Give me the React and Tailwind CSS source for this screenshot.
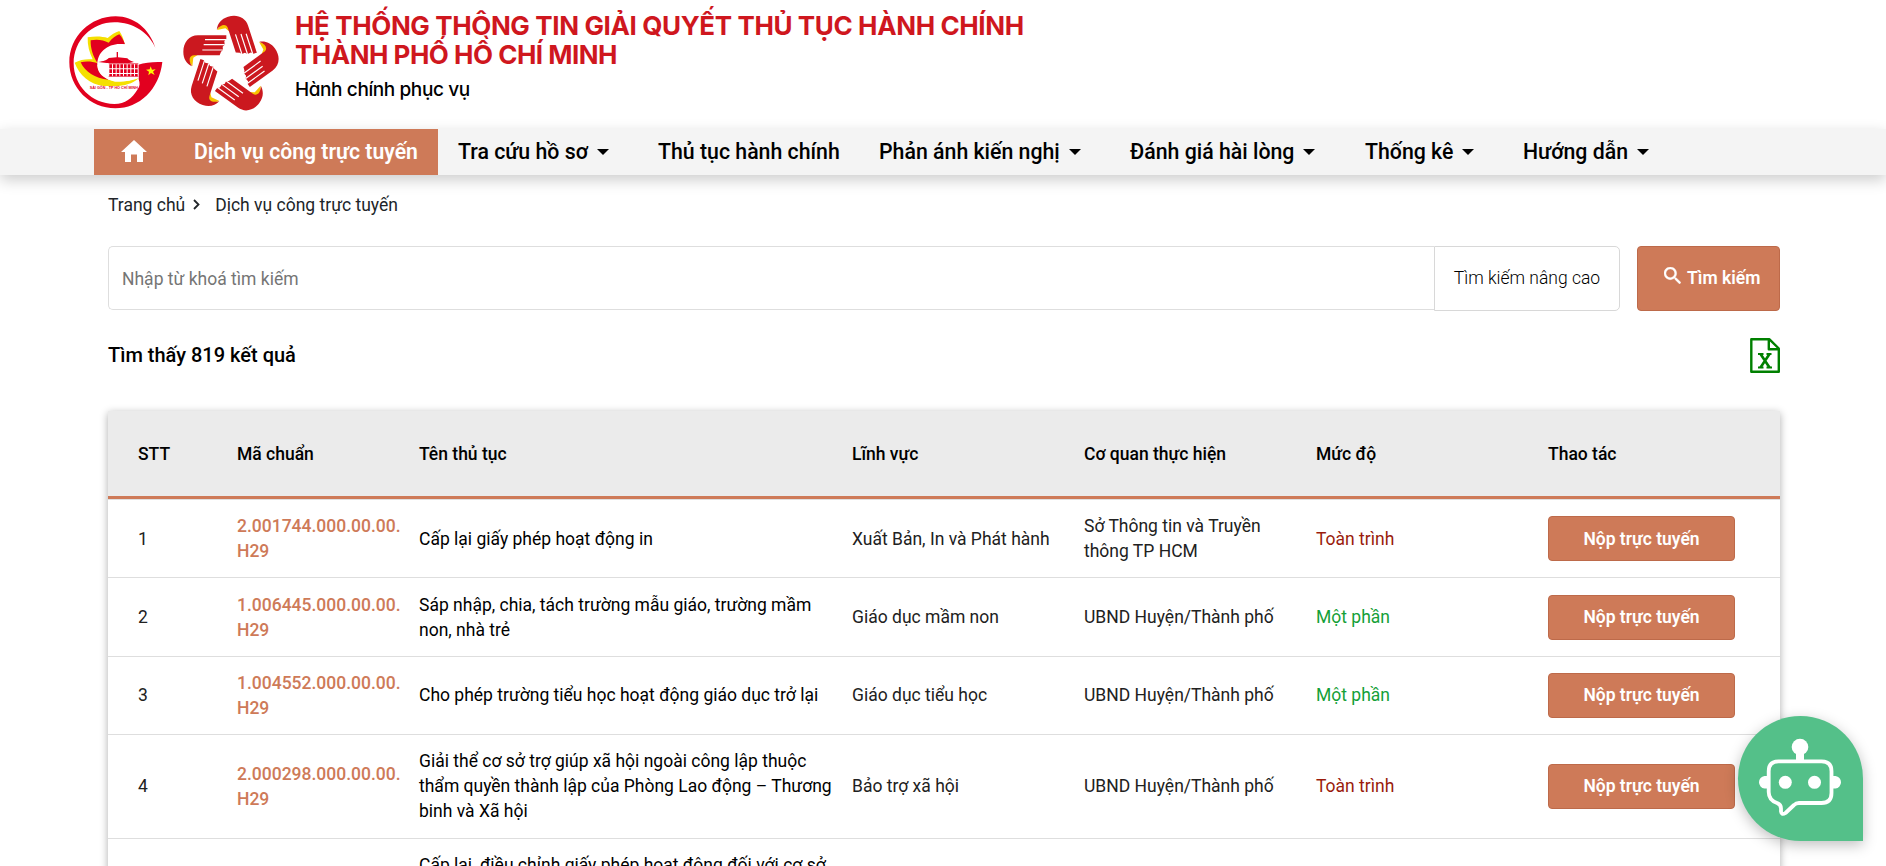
import React from "react";

const navItems = [
  { label: "Tra cứu hồ sơ", caret: true, width: "w-[200px]" },
  { label: "Thủ tục hành chính", caret: false, width: "w-[221px]" },
  { label: "Phản ánh kiến nghị", caret: true, width: "w-[251px]" },
  { label: "Đánh giá hài lòng", caret: true, width: "w-[235px]" },
  { label: "Thống kê", caret: true, width: "w-[158px]" },
  { label: "Hướng dẫn", caret: true, width: "w-[170px]" },
];

const rows = [
  {
    id: 1,
    code: ["2.001744.000.00.00.", "H29"],
    name: ["Cấp lại giấy phép hoạt động in"],
    field: "Xuất Bản, In và Phát hành",
    agency: ["Sở Thông tin và Truyền", "thông TP HCM"],
    level: "Toàn trình",
  },
  {
    id: 2,
    code: ["1.006445.000.00.00.", "H29"],
    name: ["Sáp nhập, chia, tách trường mẫu giáo, trường mầm", "non, nhà trẻ"],
    field: "Giáo dục mầm non",
    agency: ["UBND Huyện/Thành phố"],
    level: "Một phần",
  },
  {
    id: 3,
    code: ["1.004552.000.00.00.", "H29"],
    name: ["Cho phép trường tiểu học hoạt động giáo dục trở lại"],
    field: "Giáo dục tiểu học",
    agency: ["UBND Huyện/Thành phố"],
    level: "Một phần",
  },
  {
    id: 4,
    code: ["2.000298.000.00.00.", "H29"],
    name: [
      "Giải thể cơ sở trợ giúp xã hội ngoài công lập thuộc",
      "thẩm quyền thành lập của Phòng Lao động – Thương",
      "binh và Xã hội",
    ],
    field: "Bảo trợ xã hội",
    agency: ["UBND Huyện/Thành phố"],
    level: "Toàn trình",
  },
];

function Lines({ items }) {
  return items.map((line) => (
    <span key={line} className="block whitespace-nowrap">
      {line}
    </span>
  ));
}

function CityLogo() {
  return (
    <svg className="h-[93px] w-[94px]" viewBox="27 50 282 279">
      <path
        fill="#e2001f"
        d="M286 145C268 88 222 51 167 51C90 51 28 113 28 189C28 266 90 327 166 327C238 327 298 270 307 188C280 187 255 189 235 196L236 240C240 252 240 262 233 270C216 298 196 314 163 314C95 314 41 259 41 192C41 123 95 69 163 69C220 69 266 100 286 145Z"
      />
      <path fill="#f5df00" d="M44 190C60 181 80 178 98 180C88 160 82 138 83 114C106 110 127 111 143 116C154 106 165 100 178 95C185 105 191 118 194 135L160 140L112 198C118 225 140 243 165 247C195 248 220 243 236 236C225 248 205 257 175 260H130C90 254 58 228 44 190Z" />
      <path fill="#e2001f" d="M62 189C80 185 98 187 113 192C98 170 91 145 92 123C112 119 130 122 146 130C157 116 167 109 178 105C186 114 192 125 195 135L160 140L112 198C113 215 125 232 146 241C104 238 75 217 62 189Z" />
      <path fill="#fff" d="M195 135C150 127 110 155 112 198C112 215 123 232 146 241C176 248 206 245 235 236V197L250 160Z" />
      <path fill="#e2001f" d="M114 188C130 186 142 182 146 176L170 174V158H174V174L202 177C206 183 214 186 222 188L208 191H140Z" />
      <g fill="#e2001f">
        {[148, 159, 170, 181, 192, 203, 214, 225].map((x) => (
          <path key={x} d={`M${x} 195h8v12h-8zM${x} 210h8v11h-8zM${x} 224h8v7h-8z`} />
        ))}
      </g>
      <path stroke="#e2001f" strokeWidth="2" d="M146 193H235M146 231H235" />
      <path fill="#fff600" d="M272 201L276 211L287 210L279 217L284 227L273 221L265 228L267 217L258 211L269 210Z" />
      <text
        x="89"
        y="270"
        textLength="145"
        lengthAdjust="spacingAndGlyphs"
        className="fill-[#e2001f] font-['Liberation_Sans'] text-[11px] font-bold"
      >
        SÀI GÒN - TP HỒ CHÍ MINH
      </text>
    </svg>
  );
}

function HandsLogo() {
  return (
    <svg className="h-[94px] w-[96px] overflow-visible" viewBox="366 47 288 282">
      {[0, 72, 144, 216, 288].map((angle) => (
        <g key={angle} transform={`rotate(${angle} 509 194)`}>
          <path fill="#f8c300" d="M388 185L397 198L400 172L414 163L380 160Z" />
          <path
            fill="#cb181f"
            d="M499 105L414 105C387 105 370 127 370 154C370 176 380 190 396 198C384 180 388 165 402 165L479 165L483 154L489 149L488 139L494 133L493 122L499 116Z"
          />
          <path fill="none" stroke="#fff" strokeWidth="3.5" d="M435 118H499M431 133H494M427 149H489" />
        </g>
      ))}
    </svg>
  );
}

function Header() {
  return (
    <header className="flex h-[129px] shrink-0 pl-[69px]">
      <div className="flex gap-[19px] pt-4">
        <CityLogo />
        <HandsLogo />
      </div>
      <div className="ml-[17px] pt-[11px] font-[Inter,sans-serif] [font-feature-settings:'cv11']">
        <h1 className="text-[26px] leading-[29px] font-[650] tracking-[-0.38px] whitespace-nowrap text-[#cf171e]">
          <span className="block">HỆ THỐNG THÔNG TIN GIẢI QUYẾT THỦ TỤC HÀNH CHÍNH</span>
          <span className="block tracking-[-0.5px]">THÀNH PHỐ HỒ CHÍ MINH</span>
        </h1>
        <p className="mt-[9px] text-[19px] leading-6 font-medium tracking-[-0.4px] text-black">Hành chính phục vụ</p>
      </div>
    </header>
  );
}

function NavBar() {
  return (
    <nav className="flex h-[46px] shrink-0 bg-[#f4f4f4] pl-[94px] text-[21.3px] font-medium text-black shadow-[0_5px_14px_rgba(0,0,0,0.2)]">
      <div className="flex w-20 items-center justify-center bg-[#ce7a58]">
        <svg className="-mt-0.5 h-[22px] w-[26px]" viewBox="0 0 26 22" fill="#fff">
          <path d="M13 0L26 12H22V22H16V14.5H10V22H4V12H0Z" />
        </svg>
      </div>
      <div className="flex w-[264px] items-center bg-[#ce7a58] pl-5 text-[21.2px] font-semibold whitespace-nowrap text-white">
        Dịch vụ công trực tuyến
      </div>
      {navItems.map((item) => (
        <div key={item.label} className={`flex items-center pl-5 whitespace-nowrap ${item.width}`}>
          {item.label}
          {item.caret && (
            <svg className="ml-[9px] h-1.5 w-3" viewBox="0 0 12 6">
              <path d="M0 0H12L6 6Z" />
            </svg>
          )}
        </div>
      ))}
    </nav>
  );
}

function SearchBar() {
  return (
    <div className="flex h-[65px] text-[17.5px]">
      <div className="flex h-16 w-[1326px] items-center rounded-l-[5px] border border-r-0 border-[#dedede] pt-0.5 pl-[13px] text-[#757575]">
        Nhập từ khoá tìm kiếm
      </div>
      <div className="flex w-[186px] items-center justify-center rounded-r-[5px] border border-[#d8d8d8] font-light text-black">
        Tìm kiếm nâng cao
      </div>
      <div className="ml-[17px] flex w-[143px] items-center rounded-[4px] border border-[#bd6a4a] bg-[#ce7a58] pl-[26px] font-semibold whitespace-nowrap text-white">
        <svg className="mr-[6px] mb-1.5 h-[17px] w-[17px] shrink-0" viewBox="3 3 17.5 17.5" fill="#fff" stroke="#fff" strokeWidth="0.4">
          <path d="M15.5 14h-.79l-.28-.27C15.41 12.59 16 11.11 16 9.5 16 5.91 13.09 3 9.5 3S3 5.91 3 9.5 5.91 16 9.5 16c1.61 0 3.09-.59 4.23-1.57l.27.28v.79l5 4.99L20.49 19l-4.99-5zm-6 0C7.01 14 5 11.99 5 9.5S7.01 5 9.5 5 14 7.01 14 9.5 11.99 14 9.5 14z" />
        </svg>
        Tìm kiếm
      </div>
    </div>
  );
}

function ExcelIcon() {
  return (
    <svg className="h-[35px] w-[30px]" viewBox="0 0 30 35" fill="none" stroke="#008000">
      <path strokeWidth="2.4" strokeLinejoin="round" d="M1.3 1.3H19.5L28.8 10.5V33.7H1.3ZM18.8 1.3V11.2H28.8" />
      <path strokeWidth="2.6" d="M10.5 16L19.5 29.5M19.5 16L10.5 29.5" />
      <path strokeWidth="2" d="M8 16H13.5M16.5 16H21.5M8 29.5H13.5M16.5 29.5H22" />
    </svg>
  );
}

const columns = "grid grid-cols-[99px_182px_433px_232px_232px_232px_1fr] items-center pl-[30px]";

function ProcedureTable() {
  return (
    <section className="mt-[38px] text-[17.5px] shadow-[0_2px_8px_rgba(0,0,0,0.32)]">
      <div className={`${columns} h-[88px] border-b-[3px] border-[#ce7a58] bg-[#ebebeb] pt-0.5 font-medium text-black`}>
        <div>STT</div>
        <div>Mã chuẩn</div>
        <div>Tên thủ tục</div>
        <div>Lĩnh vực</div>
        <div>Cơ quan thực hiện</div>
        <div>Mức độ</div>
        <div>Thao tác</div>
      </div>
      <div className="border-t border-[#e0e0e0] bg-white">
        {rows.map((row) => (
          <div
            key={row.id}
            className={`${columns} border-b border-[#dedede] pt-[14.2px] pb-[13.2px] leading-[25px] text-[#212121]`}
          >
            <div>{row.id}</div>
            <div className="font-medium text-[#ce7a58]">
              <Lines items={row.code} />
            </div>
            <div className="text-black">
              <Lines items={row.name} />
            </div>
            <div>{row.field}</div>
            <div>
              <Lines items={row.agency} />
            </div>
            <div className={row.level === "Toàn trình" ? "text-[#9a1c0c]" : "text-[#15a038]"}>{row.level}</div>
            <button className="-mt-px h-[45px] w-[187px] rounded-[4px] border border-[#bd6a4a] bg-[#ce7a58] pt-px font-semibold text-white">
              Nộp trực tuyến
            </button>
          </div>
        ))}
        <div className={`${columns} h-[104px] items-start pt-[14.2px] leading-[25px] text-black`}>
          <div className="col-start-3 whitespace-nowrap">Cấp lại, điều chỉnh giấy phép hoạt động đối với cơ sở</div>
        </div>
      </div>
    </section>
  );
}

function ChatBubble() {
  return (
    <div className="absolute top-[716px] left-[1738px] h-[125px] w-[125px] rounded-full rounded-br-none bg-[#54c089] shadow-[0_4px_14px_rgba(0,0,0,0.25)]">
      <svg className="h-[125px] w-[125px]" viewBox="0 0 125 125">
        <g fill="#fff">
          <circle cx="62" cy="31" r="8.3" />
          <path d="M58 36H66V46H58Z" />
          <circle cx="47.3" cy="66.3" r="6.5" />
          <circle cx="76.5" cy="66.3" r="6.5" />
          <path d="M30 60V72.5H26.5A6.3 6.3 0 0 1 26.5 60ZM94 60V72.5H97.5A6.3 6.3 0 0 0 97.5 60Z" />
        </g>
        <path
          fill="none"
          stroke="#fff"
          strokeWidth="3.8"
          strokeLinejoin="round"
          d="M40.5 45.3H83.5Q93.5 45.3 93.5 55.3V77Q93.5 87 83.5 87H61Q58 87 56 89L47.5 97Q43.5 99.5 43 95.5V92.5Q43 88.5 39 87Q30.7 84 30.7 76V55.3Q30.7 45.3 40.5 45.3Z"
        />
      </svg>
    </div>
  );
}

export default function App() {
  return (
    <div className="relative flex h-[866px] w-[1886px] flex-col overflow-hidden bg-white font-[Roboto,sans-serif]">
      <Header />
      <NavBar />
      <main className="w-[1780px] pl-[108px]">
        <div className="flex h-[71px] items-start pt-[17px] text-[17.5px] leading-[26px] text-[#212529]">
          Trang chủ
          <svg className="mt-[7px] mr-[15px] ml-[8px] h-[11px] w-[7px]" viewBox="0 0 7 11" fill="none" stroke="#212529" strokeWidth="1.8">
            <path d="M1 1L5.5 5.5L1 10" />
          </svg>
          Dịch vụ công trực tuyến
        </div>
        <SearchBar />
        <div className="mt-[27px] flex h-[35px] items-center justify-between text-[20px] font-medium text-black">
          <span className="pb-0.5">Tìm thấy 819 kết quả</span>
          <ExcelIcon />
        </div>
        <ProcedureTable />
      </main>
      <ChatBubble />
    </div>
  );
}
